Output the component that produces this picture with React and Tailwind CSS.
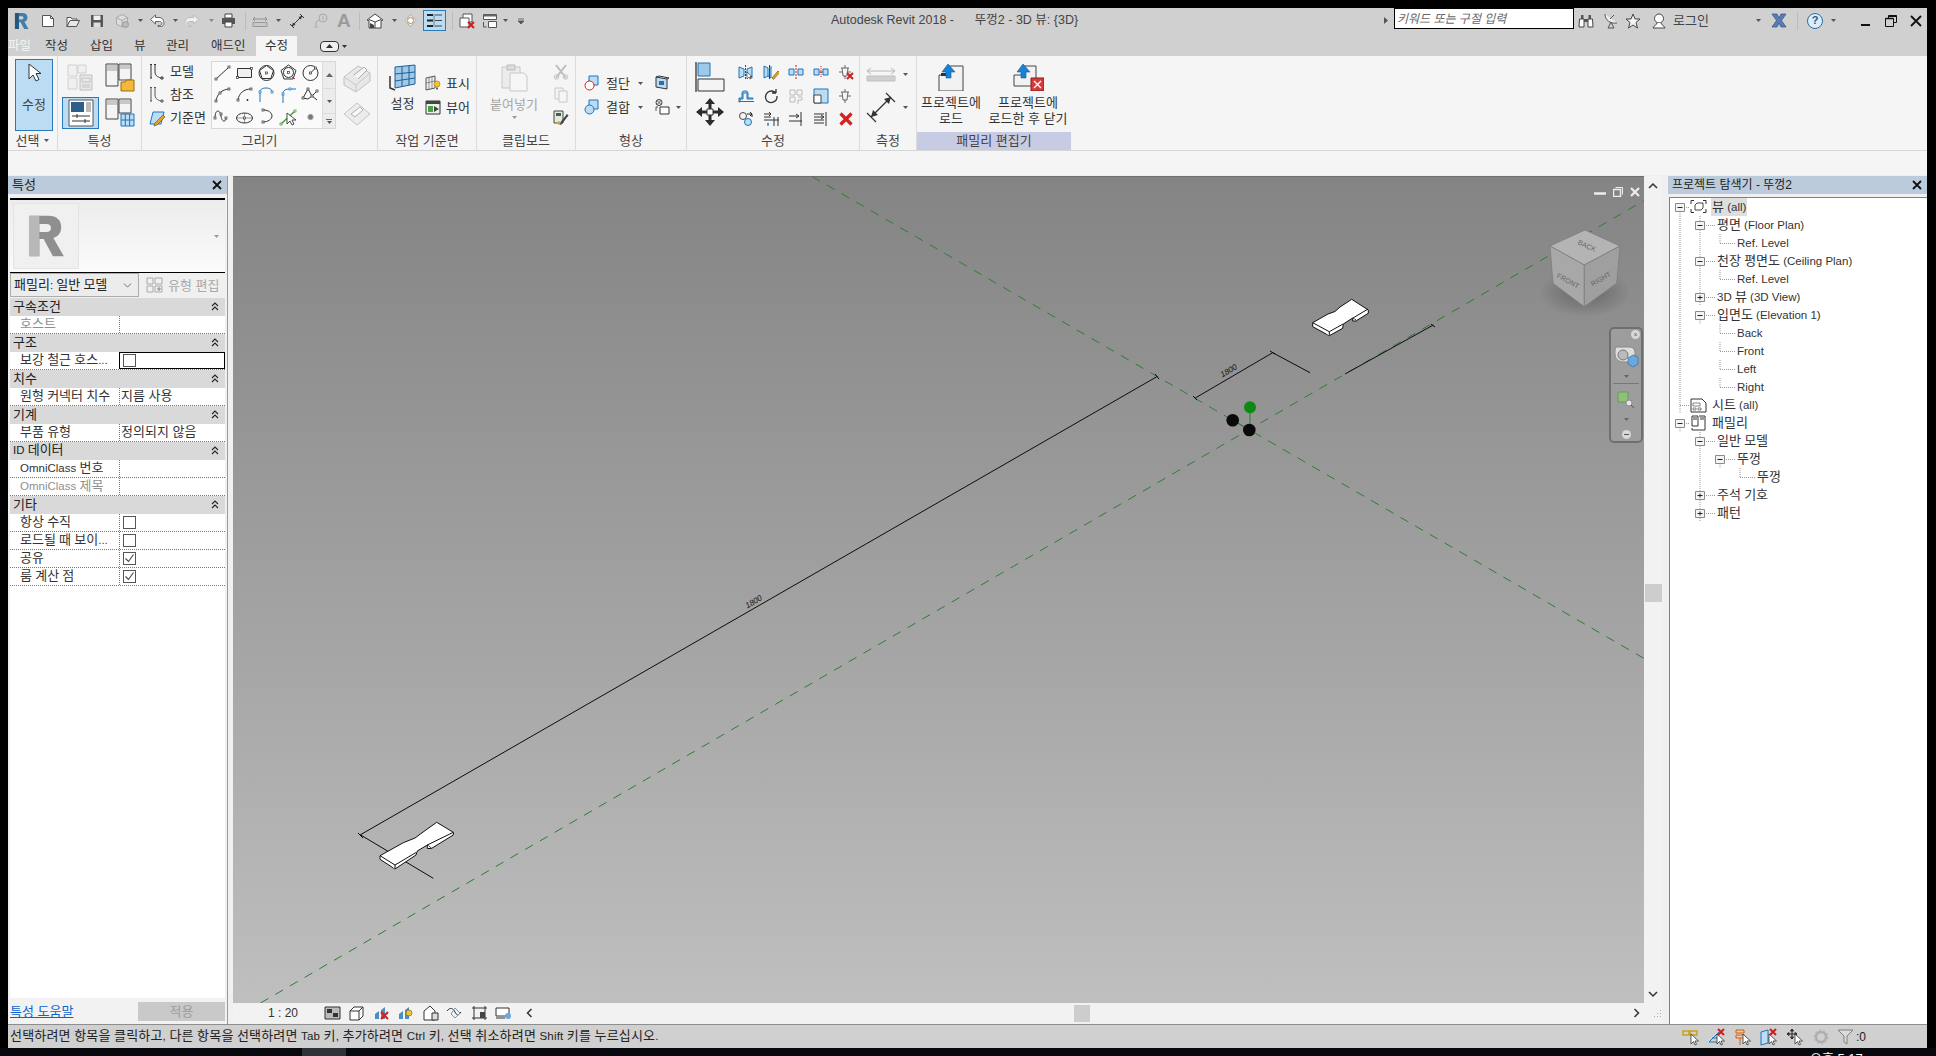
import React from "react";
import { ChevronDown } from "lucide-react";

const B = "#1b75bc", LB = "#bcdcf3", G = "#a8a8a8";
const I = ({ w = 16, h = 16, c = "", children }) => (
  <svg width={w} height={h} viewBox={`0 0 ${w} ${h}`} fill="none" strokeWidth="1" className={"block shrink-0 " + c}>{children}</svg>
);
const Tx = ({ t }) => (
  <>
    {String(t).split(/([\uac00-\ud7a3]+)/).map((p, i) =>
      i % 2 ? <span key={i}>{p}</span> : p ? <span key={i} className="text-[11.5px]">{p}</span> : null
    )}
  </>
);
const Caret = ({ c = "", color = "#555" }) => <I w={5} h={3} c={c}><path d="M0 0h5L2.5 3z" fill={color} /></I>;
const Sep = ({ c = "" }) => <div className={"w-px h-[18px] bg-[#bcbcbc] shrink-0 " + c} />;
const Pt = ({ x, y, s = "#333" }) => <rect x={x - 1} y={y - 1} width="2" height="2" fill="#fff" stroke={s} strokeWidth=".7" />;

const RLogo = ({ w, h, c, fill = "#3f7fb0", dark = "#27567d" }) => (
  <svg width={w} height={h} viewBox="0 0 16 19" className={"block shrink-0 " + (c || "")}>
    <path fillRule="evenodd" d="M1 1h8c3.6 0 5.4 2 5.4 4.8 0 2.4-1.3 3.9-3.3 4.5l4.4 7.7h-4.6L7 10.8H5.2V18H1zM5.2 4.4v3.4h3c1.2 0 1.9-.6 1.9-1.7s-.7-1.7-1.9-1.7z" fill={fill} />
    <path d="M1 1h4.200v17H1z" fill={dark} />
  </svg>
);

/* quick access */
const QNew = () => <I w={14} h={14} c="ml-[12px]"><path d="M1.500 1.500h8l3 3v8h-11z" fill="#fff" stroke="#555" /><path d="M9.500 1.500v3h3" stroke="#555" /></I>;
const QOpen = () => <I w={14} h={14} c="ml-[11px]"><path d="M1 3.500h4l1 1.500h5v2H4l-3 5.500z" fill="#fff" stroke="#555" /><path d="M1 12.500h9.500l3-6h-9.500z" fill="#e8e8e8" stroke="#555" /></I>;
const QSave = () => <I w={14} h={14} c="ml-[10px]"><path d="M1 1h12v12H1z" fill="#555" /><path d="M3.500 1.500h7v4.500h-7z" fill="#f0f0f0" /><path d="M3.500 8.500h7v4.500h-7z" fill="#ddd" /></I>;
const QSync = () => <I w={16} h={16} c="ml-[10px]"><path d="M8 1.500l5.500 3v6.500L8 14l-5.500-3V4.500z" fill="#ddd" stroke={G} /><path d="M2.500 4.500L8 7.500l5.500-3M8 7.500V14" stroke={G} /><circle cx="11.500" cy="11.500" r="3" fill="#bbb" stroke="#999" /></I>;
const QUndo = () => <I w={16} h={13} c="ml-[6px]"><path d="M6.500 1L1.500 5.500l5 4.500V7.500h4c1.500 0 2.500.7 2.500 2s-1 2-2.500 2H9v1.200h2c2.500 0 4-1.400 4-3.400S13.500 3.500 11 3.500H6.500z" fill="#fff" stroke="#555" strokeWidth=".9" /></I>;
const QRedo = () => <I w={15} h={13} c="ml-[7px]"><path d="M8.500 1l5 4.500-5 4.500V7.500h-4c-1.500 0-2.500.7-2.500 2s1 2 2.500 2H6v1.200H4C1.500 12.700 0 11.300 0 9.300S1.500 3.500 4 3.500h4.500z" fill="#f0f0f0" stroke="#b8b8b8" strokeWidth=".9" /></I>;
const QPrint = () => <I w={15} h={15} c="ml-[7px]"><path d="M4 1h7v4H4z" fill="#fff" stroke="#444" /><path d="M1 5h13v6H1z" fill="#555" /><path d="M4 9h7v5H4z" fill="#fff" stroke="#444" /></I>;
const QMeasure = () => <I w={16} h={14} c="ml-[6px]"><path d="M1 5h14M3 3l-2 2 2 2M13 3l2 2-2 2" stroke="#8f8f8f" /><path d="M1 8.500h14v4H1z" fill="#c9c9c9" stroke="#999" /></I>;
const QAlign = () => <I w={16} h={16} c="ml-[8px]"><path d="M3 13L13 3" stroke="#333" /><path d="M13 3l-3.500 1 2.500 2.500zM3 13l3.500-1L4 9.500z" fill="#333" /><path d="M1 11l4 4M11 1l4 4" stroke="#333" /></I>;
const QTag = () => <I w={15} h={15} c="ml-[8px]"><circle cx="10" cy="5" r="4" stroke={G} /><path d="M6.500 7L3 9v5M1.500 14h3" stroke={G} /><path d="M10 3v4" stroke={G} /></I>;
const Q3D = () => <I w={18} h={16} c="ml-[6px]"><path d="M9 1L1 7l2 .5V15h12V7.500L17 7z" fill="#fff" stroke="#444" /><path d="M3 6.500l6 2.500 6-2.500M9 9v6" stroke="#444" /><path d="M4 10l4 2v3H4z" fill="#444" /></I>;
const QSection = () => <I w={15} h={15} c="ml-[6px]"><path d="M7.500 1.500l5.500 6-5.500 6-5.500-6z" fill="#eee" stroke="#aaa" /><circle cx="7.500" cy="7.500" r="3" fill="#fff" stroke="#c08a3a" /></I>;
const QThin = () => (
  <div className="ml-[5px] w-[23px] h-[21px] bg-[#bcdcf3] border border-[#2a7ab8] flex items-center justify-center shrink-0">
    <I w={17} h={15}><path d="M1 2h6M1 7.500h6M1 13h6" stroke="#222" strokeWidth="2" /><path d="M9 2h7M9 7.500h7M9 13h7" stroke="#222" strokeWidth=".8" /><path d="M8 1v13" stroke="#555" strokeWidth=".7" /></I>
  </div>
);
const QClose = () => <I w={16} h={16} c="ml-[6px]"><path d="M4 1h9v8H4z" fill="#fff" stroke="#555" /><path d="M1 5h9v9H1z" fill="#fff" stroke="#555" /><path d="M9 9l6 6M15 9l-6 6" stroke="#cc1f1f" strokeWidth="2" /></I>;
const QSwitch = () => <I w={16} h={16} c="ml-[7px]"><path d="M1.500 1.500h13v5h-13z" fill="#fff" stroke="#555" /><path d="M1.500 1.500h13v2h-13z" fill="#666" /><path d="M6.500 8.500h8v6h-8z" fill="#fff" stroke="#555" /><path d="M1.500 9v5h3" stroke="#555" /></I>;

/* tools */
const T = {
  line: <><path d="M4 17L17 5" stroke="#333" /><Pt x={4} y={17} /><Pt x={17} y={5} /></>,
  rect: <><path d="M3.500 6.500h14v9h-14z" fill="#efefef" stroke="#333" /><Pt x={3.500} y={15.500} /><Pt x={17.500} y={6.500} /></>,
  ins: <><circle cx="10.500" cy="11" r="7.500" stroke="#333" /><path d="M10.500 3.500l7 5-2.700 8h-8.600l-2.700-8z" stroke="#333" /><Pt x={10.500} y={11} /></>,
  cir: <><path d="M10.500 3l7.500 5.500-3 8.500H6L3 8.500z" stroke="#333" /><circle cx="10.500" cy="10.500" r="5" stroke="#333" /><Pt x={10.500} y={10.500} /><path d="M14 15l3 2" stroke="#c22" /></>,
  circle: <><circle cx="10.500" cy="11" r="7.500" stroke="#333" /><path d="M10.500 11l5-5" stroke="#333" /><Pt x={10.500} y={11} /><Pt x={15.500} y={6} /></>,
  arc1: <><path d="M4 17C5 10 10 5.500 17 5" stroke="#333" /><Pt x={4} y={17} /><Pt x={17} y={5} /><Pt x={8} y={9} /></>,
  arc2: <><path d="M4 16C5 9 10 5 17 5" stroke="#333" /><Pt x={4} y={16} /><Pt x={17} y={5} /><path d="M13.500 15v2M12.500 16h2" stroke="#333" /></>,
  tan: <><path d="M4 8v10" stroke={B} /><path d="M4 8c0-3 3-4 6-4s6 1 6 4" stroke={B} /><Pt x={4} y={8} s={B} /><Pt x={16} y={8} s={B} /></>,
  fil: <><path d="M5 10V19M5 10C5 6 8 5 12 5h6" stroke={B} /><Pt x={5} y={10} s={B} /><Pt x={12} y={5} s={B} /></>,
  spl: <><path d="M3 14l5-9 4 7 5-5M3 14l5 1 4-3 5 4" stroke="#333" /><Pt x={3} y={14} /><Pt x={8} y={5} /><Pt x={12} y={12} /><Pt x={17} y={7} /></>,
  spl2: <><path d="M3 12C3 3 8 3 9 10s5 6 5 2" stroke="#333" /><Pt x={3} y={12} /><Pt x={14} y={12} /><Pt x={9} y={8} /></>,
  ell: <><ellipse cx="10.500" cy="12" rx="8" ry="5" stroke="#333" /><path d="M10.500 7v10M2.500 12h16" stroke="#333" strokeWidth=".5" /><Pt x={10.500} y={12} /></>,
  pel: <><path d="M7 4c6 0 9 3 9 6s-4 6-9 6" stroke="#333" /><Pt x={7} y={4} /><Pt x={7} y={16} /></>,
  pick: <><path d="M3 18L17 5" stroke="#3a9a2c" strokeWidth="1.300" /><Pt x={3} y={18} s="#3a9a2c" /><Pt x={17} y={5} s="#3a9a2c" /><path d="M9 7v11l3-3 2 4 2-1-2-4h4z" fill="#fff" stroke="#222" strokeWidth=".8" /></>,
  pnt: <circle cx="10.500" cy="11" r="2.700" fill="#777" stroke="#aaa" />,
};
const Tool = ({ k }) => <I w={22} h={22}>{T[k]}</I>;
const toolKeys = ["line", "rect", "ins", "cir", "circle", "arc1", "arc2", "tan", "fil", "spl", "spl2", "ell", "pel", "pick", "pnt"];

const M = {
  m1: <><path d="M1 3v11l5-2V5zM14 3v11l-5-2V5z" fill={LB} stroke={B} /><path d="M7.500 1v14" stroke="#444" strokeDasharray="2 1" /><path d="M9 8v7l2-2 1 2 1-.5-1-2h2z" fill="#fff" stroke="#222" strokeWidth=".6" /></>,
  m2: <><path d="M1 2v12l4-2V4zM8 2v12l-3-2" fill={LB} stroke={B} /><path d="M6.500 1v14" stroke="#444" /><path d="M9 14l6-7 1.500 1.500-6 7z" fill="#f0a020" stroke="#7a5a10" strokeWidth=".7" /></>,
  m3: <><path d="M1 5h5v6H1zM10 5h5v6h-5z" fill={LB} stroke={B} /><path d="M8 1v14" stroke="#c22" strokeDasharray="2 1" /></>,
  m4: <><path d="M1 5h5v6H1zM10 5h5v6h-5z" fill={LB} stroke={B} /><path d="M8 2v12" stroke="#c22" strokeDasharray="1 1" /><path d="M6.500 8h3" stroke="#444" /></>,
  m5: <><path d="M7 1v3M3 4h8M4 4l1 8h4l1-8M7 12v3M1 8h3M10 8h3" stroke="#444" strokeWidth=".8" /><path d="M9 9l6 6M15 9l-6 6" stroke="#cc1f1f" strokeWidth="2" /></>,
  m6: <><path d="M1 14V10h3V5a2 2 0 012-2h2a2 2 0 012 2v5h5v1H9V5H5v6H2v3z" stroke={B} fill={LB} /><path d="M1 13.500h15" stroke={B} /></>,
  m7: <><path d="M13 5A6 6 0 104 13M13 5V1M13 5H9" stroke="#333" strokeWidth="1.300" /><path d="M14 8a6 6 0 01-10 5" stroke="#333" strokeWidth="1.300" /></>,
  m8: <><path d="M2 2h5v5H2zM9 2h5v5H9zM2 9h5v5H2z" stroke="#bbb" /><path d="M10 9h4v3h-4v4" stroke="#bbb" /></>,
  m9: <><path d="M1 1h14v14H1z" fill={LB} stroke={B} /><path d="M1 7h7v8H1z" fill="#fff" stroke="#444" /></>,
  m10: <><path d="M7 1v3M3 4h8M4 4l1 8h4l1-8M7 12v3M1 8h3M10 8h3" stroke="#444" strokeWidth=".8" /></>,
  m11: <><circle cx="5" cy="5" r="3.500" stroke="#444" /><circle cx="10" cy="11" r="3.500" fill={LB} stroke={B} /><path d="M9 3h5v3M12 1l2 2-2 2" stroke="#222" /></>,
  m12: <><path d="M1 3h7M1 6h7M1 9h15M11 6v9M15 6v9" stroke="#333" /><path d="M6 1l2 2-2 2" stroke="#333" /><path d="M5 12v3M4 13h2" stroke={B} /></>,
  m13: <><path d="M1 5h10M8 3l3 2-3 2M1 10h13M13 1v14" stroke="#333" /></>,
  m14: <><path d="M1 3h10M1 6h10M8 4l3 2-3 2M1 9h10M1 12h10M13 1v14" stroke="#333" /></>,
  m15: <><path d="M2.500 2.500l11 11M13.500 2.500l-11 11" stroke="#d42020" strokeWidth="3.200" /></>,
};
const modKeys = ["m1", "m2", "m3", "m4", "m5", "m6", "m7", "m8", "m9", "m10", "m11", "m12", "m13", "m14", "m15"];

const Panel = ({ w, label, children, labelC = "", noBorder }) => (
  <div className={`flex flex-col shrink-0 ${w} ${noBorder ? "" : "border-r border-[#dcdcdc]"}`}>
    <div className="h-[76px] flex">{children}</div>
    <div className={`h-[18px] pb-[2px] flex items-center justify-center text-[#444] ${labelC}`}>{label}</div>
  </div>
);

const SmallCmd = ({ icon, text, c = "" }) => (
  <div className={"flex items-center h-[23px] " + c}>{icon}<span className="ml-[4px] whitespace-nowrap">{text}</span></div>
);
const ModelIcon = ({ color = "#333" }) => <I w={18} h={18}><path d="M3 2v13M7 2v7c0 3 2 5 6 6" stroke={color} /><path d="M2 1.500h2M6 1.500h2M2 15h2M13 14h2v2h-2z" stroke={color} /></I>;

const Ribbon = () => (
  <div className="h-[95px] bg-[#f5f5f5] border-b border-[#d6d6d6] flex shrink-0">
    <Panel w="w-[50px]" label={<span className="flex items-center gap-[5px]">선택<Caret /></span>}>
      <div className="ml-[7px] mt-[3px] w-[38px] h-[72px] bg-[#bcdcf3] border border-[#2a7ab8] flex flex-col items-center">
        <I w={14} h={20} c="mt-[3px]"><path d="M2 1v15l4-4 3 6 3-1.500-3-6h5z" fill="#fff" stroke="#333" /></I>
        <span className="mt-[15px] text-[#444]">수정</span>
      </div>
    </Panel>
    <Panel w="w-[84px]" label="특성">
      <div className="ml-[4px] mt-[6px] grid grid-cols-[37px_30px] gap-x-[6px] gap-y-[5px] h-fit">
        <div className="h-[30px] flex items-center justify-center">
          <I w={30} h={30}><path d="M2 3h9v11H2zM2 16h9v11H2zM12 3h8v8h-8z" fill="#f0f0f0" stroke="#d0d0d0" /><path d="M14 13h12v15H14z" fill="#e8e8e8" stroke="#c0c0c0" /><path d="M16 16h8v4h-8zM16 23h8M16 25h8" stroke="#c4c4c4" /></I>
        </div>
        <I w={30} h={30}><path d="M1 2h12v22H1zM14 2h12v16H14z" fill="#f4f4f4" stroke="#444" /><path d="M2 3h10v6H2zM15 3h10v4H15z" fill="#c8c8c8" /><path d="M16 20h4l2-2h7v11H16z" fill="#f4b93a" stroke="#9a6c10" /></I>
        <div className="h-[32px] w-[37px] bg-[#bcdcf3] border border-[#2a7ab8] flex items-center justify-center">
          <I w={26} h={28}><path d="M1 1h24v26H1z" fill="#fff" stroke="#555" /><path d="M3 3h13v10H3z" fill="#2d5f8a" /><path d="M18 3h5v10h-5z" fill="#bbb" /><path d="M4 17h18M4 22h18M9 15v4M17 20v4" stroke="#333" /></I>
        </div>
        <I w={30} h={30}><path d="M1 2h12v20H1zM14 2h12v14H14z" fill="#f4f4f4" stroke="#444" /><path d="M2 3h10v5H2zM15 3h10v4H15z" fill="#c8c8c8" /><path d="M16 17h13v12H16z" fill={LB} stroke={B} /><path d="M20.300 17v12M24.600 17v12M16 23h13" stroke={B} /></I>
      </div>
    </Panel>
    <Panel w="w-[236px]" label="그리기">
      <div className="w-[69px] pl-[6px] pt-[4px] shrink-0 text-[#333]">
        <SmallCmd icon={<ModelIcon />} text="모델" />
        <SmallCmd icon={<ModelIcon color="#555" />} text="참조" />
        <SmallCmd text="기준면" icon={<I w={18} h={18}><path d="M5 3h11l-3 12H2z" fill={LB} stroke={B} /><path d="M7 14l8-8 2 2-8 8-3 1z" fill="#f0a020" stroke="#7a5a10" strokeWidth=".7" /></I>} />
      </div>
      <div className="mt-[5px] h-[68px] w-[125px] shrink-0 border border-[#d8d8d8] bg-[#fafafa] flex">
        <div className="grid grid-cols-[repeat(5,22px)] grid-rows-[repeat(3,22px)] w-[110px]">
          {toolKeys.map((k) => <Tool key={k} k={k} />)}
        </div>
        <div className="w-[13px] flex flex-col bg-[#ececec] border-l border-[#dcdcdc]">
          <div className="h-[26px] flex items-center justify-center"><I w={7} h={4}><path d="M0 4h7L3.500 0z" fill="#666" /></I></div>
          <div className="h-[26px] border-y border-[#dcdcdc] flex items-center justify-center"><Caret /></div>
          <div className="flex-1 flex flex-col items-center justify-center gap-px"><div className="w-[6px] h-px bg-[#666]" /><Caret /></div>
        </div>
      </div>
      <div className="ml-[6px] mt-[7px] flex flex-col gap-[9px]">
        <I w={30} h={30}><path d="M2 14L16 3l12 7v8L14 29 2 22z" fill="#e8e8e8" stroke="#c0c0c0" /><path d="M2 14l12 8 14-12M14 22v7" stroke="#c8c8c8" /><path d="M12 12l10-8 3 3-9 9" fill="#f4f4f4" stroke="#aaa" /></I>
        <I w={30} h={24}><path d="M2 12L15 1l13 11-13 11z" fill="#ececec" stroke="#c4c4c4" /><path d="M9 12l9-7 3 3-8 7z" fill="#f8f8f8" stroke="#b0b0b0" /></I>
      </div>
    </Panel>
    <Panel w="w-[99px]" label="작업 기준면">
      <div className="w-[42px] pl-[7px] pt-[8px] shrink-0 flex flex-col items-center">
        <I w={28} h={28}><path d="M6 3l20-2v19l-20 4z" fill="#9fc9e8" stroke="#1f5f95" /><path d="M6 10l20-2M6 17l20-3M13 2.500v20M20 2v19" stroke="#1f5f95" /><path d="M1 12v12l5 2" stroke="#333" strokeWidth="1.500" /></I>
        <span className="mt-[5px] text-[#333]">설정</span>
      </div>
      <div className="pl-[5px] pt-[15px] text-[#333]">
        <div className="flex items-center h-[24px]"><I w={16} h={16}><path d="M1 3l9-2v12l-9 2z" fill="#eee" stroke="#555" /><path d="M1 8l9-2M4 2.500v12M7 2v12" stroke="#555" strokeWidth=".6" /><circle cx="12" cy="9" r="3" fill="#f4c430" stroke="#9a7a10" strokeWidth=".6" /><path d="M11 12.500h2v2h-2z" fill="#666" /></I><span className="ml-[5px]">표시</span></div>
        <div className="flex items-center h-[24px]"><I w={16} h={16}><path d="M1 2h14v13H1z" fill="#eaf3ea" stroke="#333" /><path d="M1 2h14v3H1z" fill="#444" /><path d="M3 7h5v6H3z" fill="#49a149" /><path d="M9 7l5 3-5 3z" fill="#444" /></I><span className="ml-[5px]">뷰어</span></div>
      </div>
    </Panel>
    <Panel w="w-[99px]" label="클립보드">
      <div className="ml-[13px] w-[48px] pt-[7px] shrink-0 flex flex-col items-center text-[#a6a6a6]">
        <I w={28} h={29}><path d="M2 4h18v21H2z" fill="#ececec" stroke="#c8c8c8" /><path d="M7 2h8v5H7z" fill="#ddd" stroke="#bbb" /><path d="M10 10h14l3 3v15H10z" fill="#f6f6f6" stroke="#c8c8c8" /></I>
        <span className="mt-[6px] whitespace-nowrap">붙여넣기</span>
        <Caret c="mt-[5px]" color="#999" />
      </div>
      <div className="ml-[15px] pt-[4px]">
        <div className="h-[23px] flex items-center"><I w={16} h={16}><path d="M3 1l10 13M13 1L3 14" stroke="#bdbdbd" strokeWidth="2" /><circle cx="3.500" cy="13" r="2.300" stroke="#c4c4c4" /><circle cx="12.500" cy="13" r="2.300" stroke="#c4c4c4" /></I></div>
        <div className="h-[23px] flex items-center"><I w={16} h={16}><path d="M2 1h8v11H2z" fill="#f2f2f2" stroke="#c8c8c8" /><path d="M6 4h8v11H6z" fill="#f6f6f6" stroke="#c8c8c8" /></I></div>
        <div className="h-[23px] flex items-center"><I w={16} h={16}><path d="M1 1h9v12H1z" fill="#dcefdc" stroke="#444" /><path d="M3 3h5v3H3z" fill="#555" /><path d="M6 14l8-10 1.500 1.500L8 15z" fill="#444" /><path d="M3 13l3-2 2 2-2 2z" fill="#d0a050" /></I></div>
      </div>
    </Panel>
    <Panel w="w-[111px]" label="형상">
      <div className="pt-[15px] pl-[8px] text-[#333]">
        <div className="flex items-center h-[24px]">
          <I w={15} h={16}><path d="M5 1h9v9H5z" fill={LB} stroke={B} /><circle cx="5.500" cy="10.500" r="4.500" fill="#fff" stroke="#c22" /></I>
          <span className="ml-[7px] w-[24px] whitespace-nowrap">절단</span><Caret c="ml-[8px]" />
          <I w={16} h={16} c="ml-[11px]"><path d="M2 2l11 2v10L2 12z" fill={LB} stroke="#333" /><path d="M5 6h5v4H5z" fill="#2d6fa5" /><path d="M2 2l3-1 10 2-2 1" stroke="#333" /></I>
        </div>
        <div className="flex items-center h-[24px]">
          <I w={15} h={16}><path d="M5 1h9v9H5z" fill={LB} stroke={B} /><circle cx="5.500" cy="10.500" r="4.500" fill={LB} stroke={B} /></I>
          <span className="ml-[7px] w-[24px] whitespace-nowrap">결합</span><Caret c="ml-[8px]" />
          <I w={16} h={16} c="ml-[11px]"><circle cx="5" cy="3.500" r="3" stroke="#333" /><path d="M3 1.500l4 4M7 1.500l-4 4M2 8h2M2 8v4" stroke="#333" strokeWidth=".8" /><path d="M6 8h9v7H6z" fill="#fff" stroke="#333" /></I>
          <Caret c="ml-[6px]" />
        </div>
      </div>
    </Panel>
    <Panel w="w-[173px]" label="수정">
      <div className="ml-[8px] mt-[6px] flex flex-col gap-[5px] shrink-0">
        <I w={30} h={30}><path d="M1 0v30" stroke="#333" strokeWidth="1.300" /><path d="M3 1h12v13H3z" fill="#9fc9e8" stroke={B} /><path d="M3 17h26v12H3z" fill="#f4f4f4" stroke="#333" /></I>
        <I w={30} h={30}><path d="M15 1l5 6h-3.500v16H20l-5 6-5-6h3.500V7H10zM1 15l6-5v3.500h16V10l6 5-6 5v-3.500H7V20z" fill="#2c2c2c" /><path d="M12 12h6v6h-6z" fill="#fff" stroke="#333" /></I>
      </div>
      <div className="ml-[8px] mt-[4px] grid grid-cols-[repeat(5,25px)] grid-rows-[24px_23px_23px] h-fit">
        {modKeys.map((k) => <div key={k} className="flex items-center justify-center"><I w={16} h={16}>{M[k]}</I></div>)}
      </div>
    </Panel>
    <Panel w="w-[57px]" label="측정">
      <div className="ml-[6px] mt-[9px] flex flex-col gap-[9px]">
        <div className="flex items-center"><I w={30} h={18}><path d="M1 6h28M5 3L1 6l4 3M25 3l4 3-4 3" stroke="#b8b8b8" /><path d="M1 11h28v5H1z" fill="#d0d0d0" stroke="#c0c0c0" /></I><Caret c="ml-[7px]" /></div>
        <div className="flex items-center"><I w={30} h={31}><path d="M5 25L25 5" stroke="#333" strokeWidth="1.200" /><path d="M25 5l-7 2 5 5zM5 25l7-2-5-5z" fill="#333" /><path d="M1 21l9 9M20 1l9 9" stroke="#333" strokeWidth="1.200" /></I><Caret c="ml-[7px]" /></div>
      </div>
    </Panel>
    <Panel w="w-[154px]" noBorder label="패밀리 편집기" labelC="bg-[#c8cbe4]">
      <div className="w-[68px] flex flex-col items-center shrink-0 pt-[7px] text-[#333] leading-[16px]">
        <I w={26} h={28}><path d="M10 3h15v25H1V12h9z" fill="#f2f2f2" stroke="#444" /><path d="M3 10h5v3H3z" fill="#333" /><path d="M8 1l7 8h-4v6H6V9H2z" transform="translate(2 0)" fill="#1682d8" stroke="#0d5c9c" strokeWidth=".6" /></I>
        <span className="mt-[4px] whitespace-nowrap">프로젝트에</span>
        <span>로드</span>
      </div>
      <div className="w-[86px] flex flex-col items-center shrink-0 pt-[7px] text-[#333] leading-[16px]">
        <I w={32} h={28}><path d="M10 3h14v20H2V12h8z" fill="#f2f2f2" stroke="#444" /><path d="M8 1l7 8h-4v6H6V9H2z" transform="translate(3 0)" fill="#1682d8" stroke="#0d5c9c" strokeWidth=".6" /><path d="M19 15h13v13H19z" fill="#d83a3a" stroke="#8f1b1b" /><path d="M22 18l7 7M29 18l-7 7" stroke="#fff" strokeWidth="1.300" /></I>
        <span className="mt-[4px] whitespace-nowrap">프로젝트에</span>
        <span className="whitespace-nowrap">로드한 후 닫기</span>
      </div>
    </Panel>
  </div>
);

const DblChev = () => <I w={8} h={9} c="mr-[6px]"><path d="M1 4l3-3 3 3M1 8l3-3 3 3" stroke="#222" strokeWidth="1.100" /></I>;
const Check = ({ on }) => (
  <div className="w-[13px] h-[13px] border border-[#555] bg-white flex items-center justify-center">
    {on && <I w={11} h={11}><path d="M1.500 5.500l3 3 5-7" stroke="#444" strokeWidth="1.100" /></I>}
  </div>
);
const props = [
  ["구속조건", [["호스트", "", "gray"]]],
  ["구조", [["보강 철근 호스...", "focus"]]],
  ["치수", [["원형 커넥터 치수", "지름 사용"]]],
  ["기계", [["부품 유형", "정의되지 않음"]]],
  ["ID 데이터", [["OmniClass 번호", ""], ["OmniClass 제목", "", "gray"]]],
  ["기타", [["항상 수직", "off"], ["로드될 때 보이...", "off"], ["공유", "on"], ["룸 계산 점", "on"]]],
];
const CloseX = () => <I w={10} h={10} c="mr-[5px]"><path d="M1 1l8 8M9 1L1 9" stroke="#111" strokeWidth="1.800" /></I>;

const PropertiesPanel = () => (
  <div className="w-[220px] shrink-0 flex flex-col border-r border-[#9a9a9a]">
    <div className="h-[18px] bg-[#bccbdb] flex items-center justify-between pl-[4px] pb-px shrink-0 text-[#222]">특성<CloseX /></div>
    <div className="h-[4px] shrink-0" />
    <div className="mx-[2px] h-[75px] border-t-2 border-b border-black bg-linear-to-b from-[#ececec] to-[#fbfbfb] flex items-center justify-between shrink-0">
      <div className="ml-[3px] w-[66px] h-[66px] bg-[#f0f0f0] border border-[#e4e4e4] flex items-center justify-center">
        <RLogo w={38} h={46} fill="#8f8f8f" dark="#b8b8b8" />
      </div>
      <Caret c="mr-[6px]" color="#999" />
    </div>
    <div className="mx-[2px] h-[25px] pb-px flex items-center shrink-0">
      <div className="w-[129px] h-[24px] bg-[#ececec] border border-[#adadad] flex items-center justify-between pl-[3px] pr-[4px] text-[#222] whitespace-nowrap">
        <span><Tx t="패밀리: 일반 모델" /></span><ChevronDown size={13} strokeWidth={1.500} color="#555" />
      </div>
      <I w={17} h={16} c="ml-[7px]"><path d="M1 1h6v6H1zM1 9h6v6H1zM9 1h7v6H9zM9 9h7v6H9z" stroke="#aaa" /><path d="M11 12h4M13 10v4" stroke="#888" /></I>
      <span className="ml-[5px] text-[#a8a8a8] whitespace-nowrap">유형 편집</span>
    </div>
    <div className="mx-[2px] flex-1 bg-white text-[#333]">
      {props.map(([sec, rows]) => (
        <div key={sec}>
          <div className="h-[18px] bg-[#d9d9d9] flex items-center justify-between pl-[3px] pb-[2px] text-[#222]"><span><Tx t={sec} /></span><DblChev /></div>
          {rows.map(([l, v, g]) => (
            <div key={l} className="h-[18px] flex border-b border-dotted border-[#777]">
              <div className={`w-[109px] shrink-0 pl-[10px] pb-[2px] flex items-center whitespace-nowrap ${g === "gray" ? "text-[#8f8f8f]" : ""}`}><span><Tx t={l} /></span></div>
              <div className={`flex-1 flex items-center border-l border-dotted border-[#777] ${v === "focus" ? "border border-solid border-black" : ""} ${["on", "off", "focus"].includes(v) ? "pl-[3px]" : "pl-[1px] pb-[2px]"}`}>
                {v === "on" ? <Check on /> : v === "off" || v === "focus" ? <Check /> : v}
              </div>
            </div>
          ))}
        </div>
      ))}
    </div>
    <div className="h-[26px] mx-[1px] pl-[1px] bg-[#f2f2f2] flex items-center justify-between shrink-0">
      <span className="text-[#0b63ce] underline whitespace-nowrap">특성 도움말</span>
      <div className="w-[87px] h-[19px] bg-[#c9c9c9] text-[#9c9c9c] flex items-center justify-center mr-[1px]">적용</div>
    </div>
  </div>
);

const Canvas = () => (
  <div className="relative flex-1 bg-linear-to-b from-[#848484] to-[#bfbfbf] border-t border-[#6f6f6f]">
    <svg viewBox="233 177 1411 826" className="absolute inset-0 w-full h-full" fill="none">
      <defs>
        <radialGradient id="sh"><stop offset="0%" stopColor="#000" stopOpacity=".28" /><stop offset="100%" stopColor="#000" stopOpacity="0" /></radialGradient>
      </defs>
      <path d="M812 176.500L1645 659" stroke="#2e7d32" strokeDasharray="9 8" />
      <path d="M260.500 1003L1645 200" stroke="#2e7d32" strokeDasharray="9 8" />
      <g stroke="#0c0c0c" strokeWidth="1">
        <path d="M1157 376.600L360 835M1155 374l4 5M358 833l5 5" />
        <path d="M360.700 835L433.300 878.300" />
        <path d="M1195.300 398L1272.700 352.700L1310 372.700" />
        <path d="M1345 374L1433.300 325" />
        <path d="M1270 351l5 3M1193 396l4 4M1431 324l4 3" />
      </g>
      <text x="755" y="604" fontSize="8" fontStyle="italic" fill="#111" textAnchor="middle" transform="rotate(-30 755 604)" fontFamily="Liberation Sans">1800</text>
      <text x="1230" y="373" fontSize="8" fontStyle="italic" fill="#111" textAnchor="middle" transform="rotate(-30 1230 373)" fontFamily="Liberation Sans">1800</text>
      <path d="M1250 407v23" stroke="#2e7d32" />
      <path d="M1233 420l16 10" stroke="#2e7d32" />
      <circle cx="1250" cy="407.300" r="6" fill="#0e8a12" />
      <circle cx="1232.700" cy="420.300" r="6.300" fill="#0a0a0a" />
      <circle cx="1249.300" cy="430" r="6.300" fill="#0a0a0a" />
      <g fill="#fff" stroke="#111" strokeWidth="1">
        <path d="M1312.700 322.700L1328 314L1335 311.500L1340 307L1351.700 299.300L1368.300 310V313.300L1356.700 320.500L1352.700 318L1343.300 324L1342.700 328.300L1329.300 335.700L1312.700 326.700Z" />
        <path d="M1312.700 322.700L1329.300 331.700V335.700M1329.300 331.700L1343 324M1353 318L1368 309M1352.700 318v3h4" />
        <path d="M380 855.700L403.300 842.700L415 838L421 833.500L436.700 822.300L453.300 832.300V835L431.700 848.300L427.300 845L417.300 851L416 855L395 869L380 859.300Z" />
        <path d="M380 855.700L395 865V869M395 865L416 852.500M427.300 845L453.300 832.300M427.300 845v3.500h4" />
      </g>
      <ellipse cx="1585" cy="292" rx="46" ry="25" fill="url(#sh)" />
      <g stroke="#7d7d7d" strokeWidth=".8">
        <path d="M1585 230L1620 246L1584.300 265L1550 246Z" fill="#b4b4b4" />
        <path d="M1550 246L1584.300 265V306.700L1553 283.300Z" fill="#a8a8a8" />
        <path d="M1584.300 265L1620 246L1616.700 283.300L1584.300 306.700Z" fill="#9f9f9f" />
      </g>
      <g fontSize="7" fill="#666" fontFamily="Liberation Sans" textAnchor="middle">
        <text x="1586" y="248" transform="rotate(25 1586 248)">BACK</text>
        <text x="1567" y="283" transform="rotate(28 1567 283)">FRONT</text>
        <text x="1602" y="281" transform="rotate(-30 1602 281)">RIGHT</text>
      </g>
    </svg>
    <div className="absolute top-[9px] right-[4px] flex items-center gap-[7px]">
      <I w={12} h={12}><path d="M0 7.500h12" stroke="#eee" strokeWidth="2.500" /></I>
      <I w={10} h={10}><path d="M.5 2.500h7v7h-7z" stroke="#eee" strokeWidth="1.400" /><path d="M2.500 .5h7v7" stroke="#eee" /></I>
      <I w={10} h={10}><path d="M1 1l8 8M9 1L1 9" stroke="#eee" strokeWidth="2.200" /></I>
    </div>
    <div className="absolute top-[150px] right-[1px] w-[34px] h-[116px] rounded-[5px] bg-[#9d9d9d] border-2 border-[#6f6f6f] flex flex-col items-center">
      <div className="self-end mr-[1px] mt-[1px] w-[9px] h-[9px] rounded-full bg-[#d8d8d8] flex items-center justify-center text-[7px] leading-none text-[#666]">×</div>
      <I w={26} h={26} c="mt-[5px]"><path d="M4 3h12c5 0 6 3 6 7v8H10C6 18 2 15 2 10c0-3 0-7 2-7z" fill="#dedede" stroke="#888" /><circle cx="10" cy="11" r="5" fill="#bbb" stroke="#777" /><path d="M15 14l5-3 5 2v7l-5 3-5-3z" fill="#6aa8de" stroke="#2e6ea8" strokeWidth=".7" /></I>
      <Caret c="mt-[5px]" color="#666" />
      <div className="w-[26px] h-px bg-[#777] mt-[5px]" />
      <I w={18} h={18} c="mt-[7px]"><path d="M1 1h10v10H1z" fill="#8fc07a" stroke="#6a9a5a" /><circle cx="12" cy="12" r="3" fill="#e6e6e6" stroke="#888" /><path d="M14 14l3 3" stroke="#555" /></I>
      <Caret c="mt-[9px]" color="#666" />
      <div className="mt-auto mb-[2px] w-[9px] h-[9px] rounded-full bg-[#d8d8d8] flex items-center justify-center"><div className="w-[5px] h-px bg-[#555]" /></div>
    </div>
  </div>
);

const VBtn = ({ children, c = "" }) => <I w={17} h={16} c={c}>{children}</I>;
const ViewBar = () => (
  <div className="h-[20px] bg-[#f2f2f2] flex items-center shrink-0 text-[#333]">
    <span className="ml-[35px] w-[61px] whitespace-nowrap text-[12px]">1 : 20</span>
    <VBtn><path d="M1 2h15v12H1z" stroke="#333" fill="#bbb" /><path d="M3 4h5v4H3zM9 8h5v4H9z" fill="#333" /></VBtn>
    <VBtn c="ml-[7.5px]"><path d="M2 6l4-4h9v9l-4 4H2z" fill="#fff" stroke="#333" /><path d="M2 6h9v9M11 6l4-4" stroke="#333" /></VBtn>
    <VBtn c="ml-[7.5px]"><path d="M2 9l4-3v8H2zM8 5l4-3v12H8z" fill="#4a8ec4" /><path d="M8 7l7 7M15 7l-7 7" stroke="#cc1f1f" strokeWidth="2" /></VBtn>
    <VBtn c="ml-[7.5px]"><path d="M2 9l4-3v8H2zM8 5l4-3v12H8z" fill="#4a8ec4" /><circle cx="12" cy="8" r="3" fill="#f4c430" stroke="#7a5a10" strokeWidth=".6" /></VBtn>
    <VBtn c="ml-[7.5px]"><path d="M8 1L2 6v9h11V6z" fill="#fff" stroke="#333" /><path d="M10 8h6v7h-6z" fill="#ddd" stroke="#333" /></VBtn>
    <VBtn c="ml-[7.5px]"><path d="M1 6c3-4 6-3 8 1s3 4 6 0" stroke="#333" /><path d="M9 3l5 5-5 5-4-4z" stroke="#6a9ac4" /></VBtn>
    <VBtn c="ml-[7.5px]"><path d="M1 3h15M1 13h15M3 1v14M14 1v14" stroke="#333" /><path d="M9 7h5v6H9z" fill="#444" /></VBtn>
    <VBtn c="ml-[7.5px]"><path d="M1 3h13v8H1z" fill="#fff" stroke="#333" /><path d="M1 13h9" stroke="#333" /><circle cx="13" cy="11" r="3" fill="#6aa8de" /></VBtn>
    <I w={7} h={10} c="ml-[14px]"><path d="M5.500 1l-4 4 4 4" stroke="#333" strokeWidth="1.500" /></I>
    <div className="ml-[541px] w-[17px] h-[17px] bg-[#cdcdcd]" />
    <I w={7} h={10} c="ml-[543px]"><path d="M1.500 1l4 4-4 4" stroke="#333" strokeWidth="1.500" /></I>
    <I w={10} h={10} c="ml-[12px]"><path d="M8 2h1v1H8zM5 5h1v1H5zM8 5h1v1H8zM2 8h1v1H2zM5 8h1v1H5zM8 8h1v1H8z" fill="#aaa" /></I>
  </div>
);

const VScroll = () => (
  <div className="w-[18px] bg-[#f2f2f2] flex flex-col items-center shrink-0">
    <I w={10} h={7} c="mt-[6px]"><path d="M1 6l4-4 4 4" stroke="#333" strokeWidth="1.500" /></I>
    <div className="mt-[395px] w-[17px] h-[18px] bg-[#cdcdcd]" />
    <I w={10} h={7} c="mt-auto mb-[5px]"><path d="M1 1l4 4 4-4" stroke="#333" strokeWidth="1.500" /></I>
  </div>
);

/* Tree */
const D = "#9a9a9a";
const Cell = ({ t, w = 20 }) => {
  const v = <path d="M10 0v18" stroke={D} strokeDasharray="1 1" />;
  const top = <path d="M10 0v9" stroke={D} strokeDasharray="1 1" />;
  const h = <path d={`M10 9.500H${w - 1}`} stroke={D} strokeDasharray="1 1" />;
  const box = (
    <>
      <path d="M5.500 5.500h9v8h-9z" fill="#f4f4f4" stroke="#8a8a8a" />
      <path d="M7.500 9.500h5" stroke="#222" />
      {t.includes("+") && <path d="M10 7.500v4" stroke="#222" />}
    </>
  );
  return (
    <I w={w} h={18}>
      {t === "v" && v}
      {t === "L" && <>{top}{h}</>}
      {t === "T" && <>{v}{h}</>}
      {(t === "b-" || t === "b+") && <>{v}{h}{box}</>}
      {t === "e-" && <>{<path d="M10 9.500V18" stroke={D} strokeDasharray="1 1" />}{h}{box}</>}
    </I>
  );
};
const TreeIcon = ({ k }) => (
  <I w={17} h={18} c="mr-[5px]">
    {k === "view" && <><path d="M1 6V2.500h3M13 2.500h3V6M1 11v3.500h3M13 14.500h3V11" stroke="#333" /><path d="M5 7l2-2h6v5l-2 2H5z" stroke="#444" /></>}
    {k === "sheet" && <><path d="M1 3h11l4 4v9H1z" fill="#fff" stroke="#333" /><path d="M3 7h7v3H3zM3 12h3v2H3zM8 12h3v2H8z" stroke="#555" strokeWidth=".7" /></>}
    {k === "fam" && <><path d="M2 2h6v10H2zM9 2h6v14H2v-2" fill="#fff" stroke="#333" /><path d="M3 3h4v3H3zM10 3h4v3h-4z" fill="#999" /></>}
  </I>
);
const tree = [
  [[["e-"]], "view", "뷰 (all)", true],
  [[["v"], ["b-", 27]], null, "평면 (Floor Plan)"],
  [[["v"], ["v"], ["L", 27]], null, "Ref. Level"],
  [[["v"], ["b-", 27]], null, "천장 평면도 (Ceiling Plan)"],
  [[["v"], ["v"], ["L", 27]], null, "Ref. Level"],
  [[["v"], ["b+", 27]], null, "3D 뷰 (3D View)"],
  [[["v"], ["e-", 27]], null, "입면도 (Elevation 1)"],
  [[["v"], ["n"], ["L", 27]], null, "Back"],
  [[["v"], ["n"], ["L", 27]], null, "Front"],
  [[["v"], ["n"], ["L", 27]], null, "Left"],
  [[["v"], ["n"], ["L", 27]], null, "Right"],
  [[["T"]], "sheet", "시트 (all)"],
  [[["e-"]], "fam", "패밀리"],
  [[["n"], ["b-", 27]], null, "일반 모델"],
  [[["n"], ["v"], ["e-", 27]], null, "뚜껑"],
  [[["n"], ["v"], ["n"], ["L", 27]], null, "뚜껑"],
  [[["n"], ["b+", 27]], null, "주석 기호"],
  [[["n"], ["b+", 27]], null, "패턴"],
];

const Browser = () => (
  <div className="w-[259px] shrink-0 flex flex-col">
    <div className="h-[18px] bg-[#bccbdb] flex items-center justify-between pl-[4px] pb-px shrink-0 text-[#222] text-[12px]">프로젝트 탐색기 - 뚜껑2<CloseX /></div>
    <div className="h-[3px] shrink-0" />
    <div className="flex-1 bg-white border-l border-t border-[#808080] ml-px text-[#333]">
      {tree.map(([cells, icon, text, sel], i) => (
        <div key={i} className="h-[18px] flex items-center whitespace-nowrap">
          {cells.map(([t, w], j) => <Cell key={j} t={t} w={w} />)}
          {icon && <TreeIcon k={icon} />}
          <span className={sel ? "bg-[#dedede] px-[1px] -ml-px leading-[18px]" : "leading-[18px]"}><Tx t={text} /></span>
        </div>
      ))}
    </div>
  </div>
);

const StatusIcon = ({ children, c = "" }) => <I w={18} h={18} c={c}>{children}</I>;
const Cur = () => <path d="M9 6v10l2.500-2.500 1.500 3.500 1.500-.7-1.500-3.300h3.500z" fill="#fff" stroke="#333" strokeWidth=".8" />;
const Status = () => (
  <div className="h-[24px] bg-[#d0d0d0] border-t border-[#8e8e8e] flex items-center shrink-0 text-[#222]">
    <span className="ml-[2px] pb-[2px] w-[1672px] whitespace-nowrap tracking-[0.19px]"><Tx t="선택하려면 항목을 클릭하고, 다른 항목을 선택하려면 Tab 키, 추가하려면 Ctrl 키, 선택 취소하려면 Shift 키를 누르십시오." /></span>
    <StatusIcon><path d="M1 3h6v4H1zM8 3h7v4H8z" stroke="#c9a21a" strokeWidth="1.500" /><Cur /></StatusIcon>
    <StatusIcon c="ml-[8px]"><path d="M1 14L11 4M1 14h10M4 10h7" stroke={B} /><path d="M10 1l6 6M16 1l-6 6" stroke="#cc1f1f" strokeWidth="2" /><Cur /></StatusIcon>
    <StatusIcon c="ml-[8px]"><path d="M2 2h8v3H2zM2 7h8v3H2z" fill="#f6c9a0" stroke="#c4611c" /><path d="M6 10v7" stroke="#c4611c" /><Cur /></StatusIcon>
    <StatusIcon c="ml-[8px]"><path d="M1 4l7-2v13l-7 2z" fill={LB} stroke={B} /><path d="M10 1l6 6M16 1l-6 6" stroke="#cc1f1f" strokeWidth="2" /><Cur /></StatusIcon>
    <StatusIcon c="ml-[8px]"><path d="M6 1v10M1 6h10M6 1L4.500 3h3zM6 11L4.500 9h3zM1 6l2-1.500v3zM11 6L9 4.500v3z" stroke="#222" /><Cur /></StatusIcon>
    <I w={16} h={16} c="ml-[9px]"><circle cx="8" cy="8" r="5" stroke="#aeaeae" strokeWidth="2.500" /><circle cx="8" cy="8" r="7" stroke="#aeaeae" strokeDasharray="2 2.400" /></I>
    <I w={17} h={16} c="ml-[8px]"><path d="M1 1h15l-6 6v8l-3-2V7z" fill="#dcdcdc" stroke="#808080" /></I>
    <span className="ml-[2px] text-[12px]">:0</span>
  </div>
);

const TitleRow = () => (
  <div className="h-[25px] bg-[#d0d0d0] flex items-center shrink-0 text-[#333]">
    <RLogo w={15} h={18} c="ml-[6px]" />
    <QNew /><QOpen /><QSave /><QSync />
    <Caret c="ml-[8px]" /><QUndo /><Caret c="ml-[8px]" /><QRedo /><Caret c="ml-[9px]" color="#888" /><QPrint />
    <Sep c="ml-[9px]" /><QMeasure /><Caret c="ml-[8px]" /><QAlign /><QTag />
    <span className="ml-[9px] w-[13px] text-[19px] font-bold text-[#9a9a9a] leading-none">A</span>
    <Sep c="ml-[9px]" /><Q3D /><Caret c="ml-[8px]" /><QSection /><QThin /><Sep c="ml-[6px]" /><QClose /><QSwitch /><Caret c="ml-[5px]" />
    <I w={6} h={6} c="ml-[10px]"><path d="M0 1h6M0 3h6L3 6z" stroke="#555" fill="#555" strokeWidth=".8" /></I>
    <div className="ml-[307px] w-[553px] shrink-0 whitespace-pre text-[#444] text-[12.5px]">Autodesk Revit 2018 -      뚜껑2 - 3D 뷰: {"{3D}"}</div>
    <I w={4} h={7}><path d="M0 0l4 3.500L0 7z" fill="#555" /></I>
    <div className="ml-[6px] w-[180px] h-[21px] self-start bg-white border border-black flex items-center pl-[2px] italic text-[#666] text-[12px] whitespace-nowrap shrink-0">키워드 또는 구절 입력</div>
    <I w={16} h={16} c="ml-[4px]"><path d="M1.500 6h4.500v8H1zM10 6h4.500l.5 8h-5z" fill="#fff" stroke="#444" /><path d="M3 2h2.500v4H3zM10.500 2H13v4h-2.500zM6 6h4v3H6z" fill="#555" /></I>
    <I w={14} h={16} c="ml-[10px]"><path d="M1 1c0 6 5 10 12 9" stroke="#555" fill="#eee" /><path d="M6 6l4-4" stroke="#555" /><path d="M4 15l3-6 3 6z" stroke="#555" /></I>
    <I w={16} h={16} c="ml-[7px]"><path d="M8 1l2 5h5l-4 3.500 1.500 5.500L8 12l-4.500 3L5 9.500 1 6h5z" fill="#f4f4f4" stroke="#444" /></I>
    <I w={16} h={16} c="ml-[10px]"><circle cx="8" cy="5.500" r="4.500" fill="#fff" stroke="#444" /><path d="M6 10c0 2-3 2-4 5h12c-1-3-4-3-4-5" fill="#fff" stroke="#444" /></I>
    <span className="ml-[6px] pb-px w-[36px] shrink-0 whitespace-nowrap text-[#444]">로그인</span>
    <Caret c="ml-[47px]" />
    <I w={16} h={15} c="ml-[10px]"><path d="M1 1h5l2 4 2-4h5l-4.500 6.500L15 14h-5l-2-4-2 4H1l4.500-6.500z" fill="#5a7db5" stroke="#31507f" strokeWidth=".7" /></I>
    <Sep c="ml-[10px]" />
    <div className="ml-[9px] w-[16px] h-[16px] rounded-full border border-[#2a6ea8] bg-[#dcecf8] text-[#1b5c94] font-bold flex items-center justify-center text-[11px] leading-none shrink-0">?</div>
    <Caret c="ml-[8px]" />
    <I w={10} h={10} c="ml-[25px]"><path d="M0 9h9" stroke="#111" strokeWidth="2" /></I>
    <I w={12} h={12} c="ml-[14px]"><path d="M3.500 3V.5h8v7H9M.5 3.500h8V11.500h-8z" stroke="#111" /><path d="M.5 3.500h8M3.500 1.200h8" stroke="#111" strokeWidth="1.500" /></I>
    <I w={12} h={12} c="ml-[13px]"><path d="M1 1l10 10M11 1L1 11" stroke="#111" strokeWidth="1.800" /></I>
  </div>
);

const TabsRow = () => (
  <div className="h-[23px] bg-[#d0d0d0] flex items-end shrink-0 text-[#333] text-[12.5px]">
    <span className="w-[37px] h-[20px] text-[#f4f4f4] flex items-center">파일</span>
    <span className="w-[45px] h-[20px] flex items-center">작성</span>
    <span className="w-[44px] h-[20px] flex items-center">삽입</span>
    <span className="w-[32px] h-[20px] flex items-center">뷰</span>
    <span className="w-[45px] h-[20px] flex items-center">관리</span>
    <span className="w-[45px] h-[20px] flex items-center">애드인</span>
    <span className="w-[41px] h-[20px] bg-[#f5f5f5] flex items-center justify-center">수정</span>
    <div className="ml-[23px] h-[20px] flex items-center gap-[3px]">
      <div className="w-[19px] h-[11px] rounded-[4px] border border-[#333] bg-[#f0f0f0] flex items-center justify-center"><I w={7} h={4}><path d="M0 4h7L3.500 0z" fill="#333" /></I></div>
      <Caret color="#333" />
    </div>
  </div>
);

export default function App() {
  return (
    <div className="w-[1936px] h-[1056px] bg-black overflow-hidden flex flex-col pt-2 text-[13px] leading-none font-['Liberation_Sans','Noto_Sans_CJK_KR',sans-serif]">
      <div className="ml-2 w-[1919px] h-[1040px] flex flex-col shrink-0">
        <TitleRow />
        <TabsRow />
        <Ribbon />
        <div className="h-[24px] bg-[#f5f5f5] shrink-0" />
        <div className="flex-1 min-h-0 bg-[#f0f0f0] flex pt-px">
          <PropertiesPanel />
          <div className="ml-[5px] w-[1429px] shrink-0 flex flex-col pb-px">
            <div className="flex-1 min-h-0 flex">
              <Canvas />
              <VScroll />
            </div>
            <ViewBar />
          </div>
          <div className="w-[6px] shrink-0" />
          <Browser />
        </div>
        <Status />
      </div>
      <div className="flex-1 flex bg-[#07090f] overflow-hidden text-white">
        <div className="ml-[302px] w-[44px] bg-[#2f3238]" />
        <span className="ml-[1464px] mt-[4px] whitespace-nowrap">오후 5:17</span>
      </div>
    </div>
  );
}
